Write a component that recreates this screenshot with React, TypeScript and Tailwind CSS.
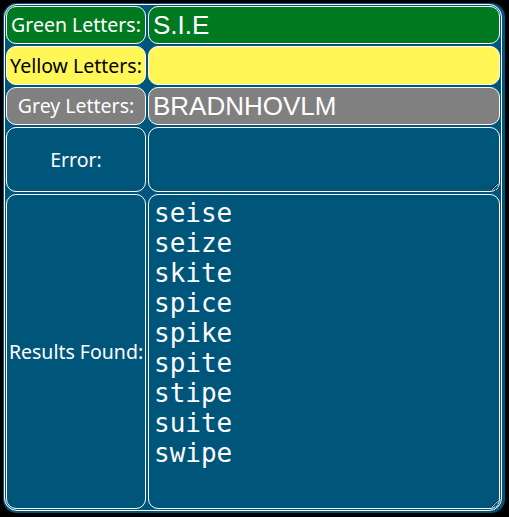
import React from 'react';

const results = ['seise', 'seize', 'skite', 'spice', 'spike', 'spite', 'stipe', 'suite', 'swipe'];

const labelFont = { fontFamily: '"Noto Sans", "DejaVu Sans", sans-serif' };

export default function App() {
  return (
    <div className="min-h-[517px] w-[509px] bg-black pt-[3px] pl-[3px]">
      <div className="w-[502px] rounded-[14px] bg-[#00557a] pt-[1px] pl-[1px] pr-[3px] pb-[2px]">
        <div className="grid grid-cols-[140px_1fr] grid-rows-[38px_39px_38px_65px_315px] gap-[2px] rounded-[13px] border border-white p-[1px]">
          <div
            className="flex items-center justify-center rounded-[10px] border border-white bg-[#007a20] text-[19.5px] text-white"
            style={labelFont}
          >
            Green Letters:
          </div>
          <input
            readOnly
            value="S.I.E"
            className="rounded-[10px] border border-white bg-[#007a20] px-[4px] text-[26px] text-white outline-none font-['Liberation_Sans',Arial,sans-serif]"
          />

          <div
            className="flex items-center justify-center rounded-[10px] border border-white bg-[#fff755] text-[19.5px] text-black"
            style={labelFont}
          >
            Yellow Letters:
          </div>
          <input
            readOnly
            value=""
            className="rounded-[10px] border border-white bg-[#fff755] px-[4px] text-[26px] text-black outline-none font-['Liberation_Sans',Arial,sans-serif]"
          />

          <div
            className="flex items-center justify-center rounded-[10px] border border-white bg-[#808080] text-[19.5px] text-white"
            style={labelFont}
          >
            Grey Letters:
          </div>
          <input
            readOnly
            value="BRADNHOVLM"
            className="rounded-[10px] border border-white bg-[#808080] px-[4px] text-[26px] text-white outline-none font-['Liberation_Sans',Arial,sans-serif]"
          />

          <div
            className="flex items-center justify-center rounded-[10px] border border-white text-[19.5px] text-white"
            style={labelFont}
          >
            Error:
          </div>
          <textarea
            readOnly
            value=""
            className="h-full w-full rounded-[10px] border border-white bg-transparent p-[5px] text-[26px] text-white outline-none font-['DejaVu_Sans_Mono',monospace]"
          />

          <div
            className="flex items-center justify-center rounded-[10px] border border-white text-[19.5px] text-white"
            style={labelFont}
          >
            Results Found:
          </div>
          <textarea
            readOnly
            value={results.join('\n')}
            className="h-full w-full rounded-[10px] border border-white bg-transparent px-[5px] pt-[3px] text-[26px] leading-[30px] text-white outline-none font-['DejaVu_Sans_Mono',monospace]"
          />
        </div>
      </div>
    </div>
  );
}
